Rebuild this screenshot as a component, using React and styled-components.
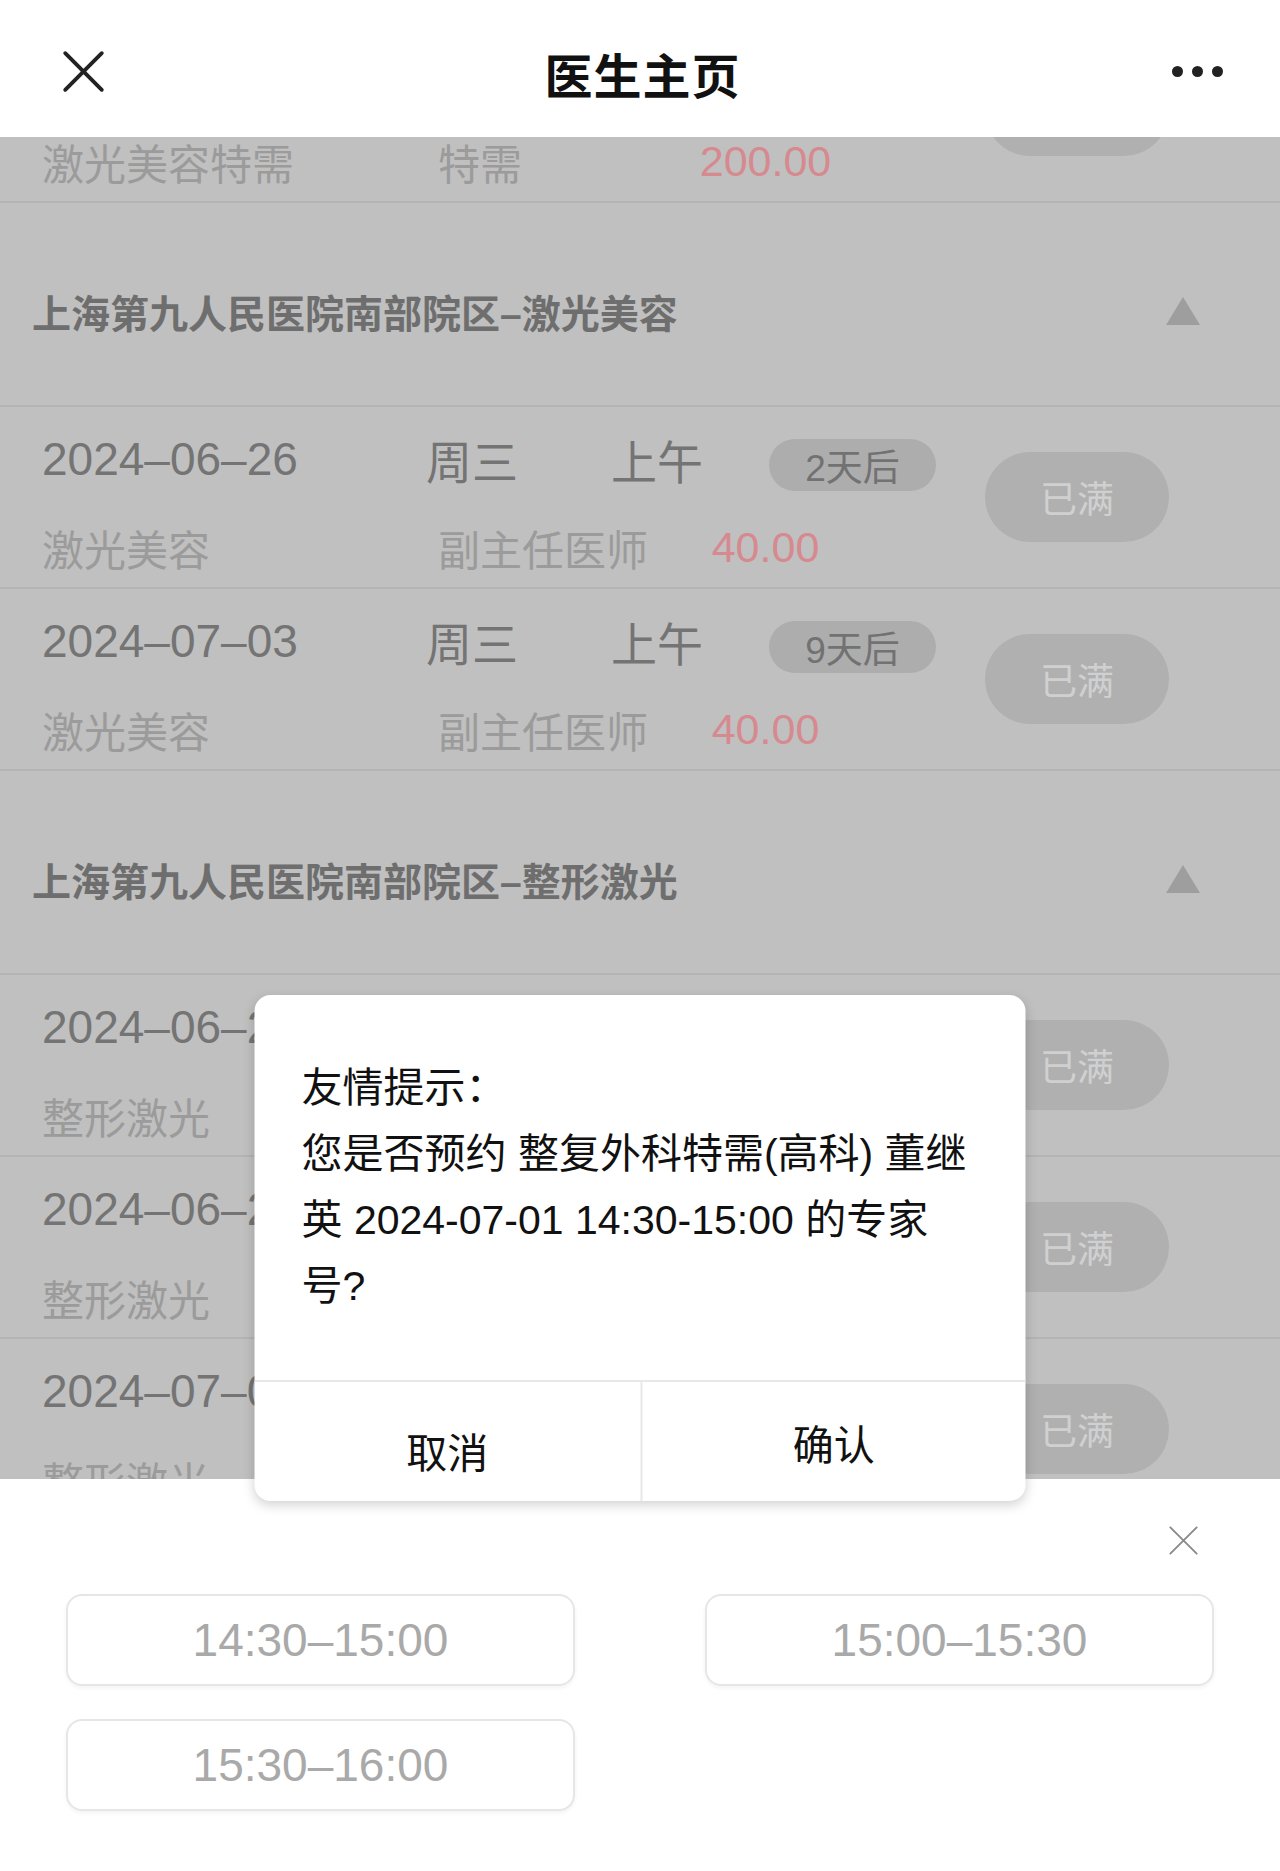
import React from 'react';
import styled, { createGlobalStyle } from 'styled-components';

const sans = `"Liberation Sans", "Noto Sans CJK SC", sans-serif`;

const GlobalStyle = createGlobalStyle`
  html, body {
    margin: 0;
    padding: 0;
    background: #ffffff;
  }
  body {
    font-family: ${sans};
  }
  * {
    box-sizing: border-box;
  }
`;

const Page = styled.div`
  position: relative;
  width: 1280px;
  height: 1871px;
  display: flex;
  flex-direction: column;
  overflow: hidden;
  background: #ffffff;
`;

const NavBar = styled.header`
  height: 137px;
  flex: none;
  display: grid;
  grid-template-columns: 1fr auto 1fr;
  align-items: center;
  padding: 6px 57px 0 62px;
  background: #ffffff;
`;

const NavTitle = styled.h1`
  margin: 0;
  font-size: 48px;
  font-weight: 700;
  color: #111111;
  letter-spacing: 1px;
  padding-top: 2px;
`;

const NavRight = styled.div`
  display: flex;
  justify-content: flex-end;
  gap: 9px;
`;

const Dot = styled.span`
  width: 11px;
  height: 11px;
  border-radius: 50%;
  background: #222222;
`;

const ListArea = styled.div`
  flex: none;
  height: 1342px;
  overflow: hidden;
  background: #c0c0c0;
`;

const Scroller = styled.div`
  transform: translateY(-${p => p.offset}px);
`;

const Section = styled.div`
  height: 204px;
  display: flex;
  align-items: center;
  justify-content: space-between;
  padding: 14px 80px 0 32px;
  border-bottom: 2px solid #b4b4b4;
`;

const SectionTitle = styled.div`
  font-size: 39px;
  font-weight: 700;
  color: #6e6e6e;
`;

const Row = styled.div`
  height: 182px;
  display: flex;
  align-items: center;
  padding: 0 111px 0 42px;
  border-bottom: 2px solid #b4b4b4;
`;

const RowInfo = styled.div`
  flex: 1;
  align-self: stretch;
  display: flex;
  flex-direction: column;
  justify-content: flex-start;
  gap: 28px;
  padding-top: 22px;
`;

const Line = styled.div`
  display: flex;
  align-items: center;
  height: 60px;
  white-space: nowrap;
`;

const Cell = styled.span`
  width: ${p => p.w}px;
  flex: none;
  font-size: ${p => p.size || 46}px;
  color: ${p => p.color || '#747474'};
  text-align: ${p => p.align || 'left'};
`;

const Badge = styled.span`
  width: 167px;
  height: 52px;
  margin-top: 12px;
  border-radius: 26px;
  background: #adadad;
  color: #727272;
  font-size: 37px;
  display: flex;
  align-items: center;
  justify-content: center;
`;

const FullButton = styled.div`
  width: 184px;
  height: 90px;
  flex: none;
  border-radius: 45px;
  background: #b0b0b0;
  color: #d0d0d0;
  font-size: 37px;
  display: flex;
  align-items: center;
  justify-content: center;
`;

const Sheet = styled.div`
  flex: 1;
  background: #ffffff;
  padding: 46px 81px 0 66px;
  display: flex;
  flex-direction: column;
`;

const SheetClose = styled.div`
  display: flex;
  justify-content: flex-end;
  height: 32px;
`;

const SlotGrid = styled.div`
  margin-top: 37px;
  margin-right: -15px;
  display: grid;
  grid-template-columns: 509px 509px;
  justify-content: space-between;
  row-gap: 33px;
`;

const Slot = styled.div`
  height: 92px;
  border: 2px solid #e6e6e6;
  border-radius: 16px;
  box-shadow: 0 2px 4px rgba(0, 0, 0, 0.05);
  display: flex;
  align-items: center;
  justify-content: center;
  font-size: 46px;
  color: #a9a9a9;
`;

const Dialog = styled.div`
  position: absolute;
  top: 995px;
  left: 50%;
  transform: translateX(-50%);
  width: 771px;
  background: #ffffff;
  border-radius: 16px;
  box-shadow: 0 4px 12px rgba(0, 0, 0, 0.18);
  overflow: hidden;
`;

const DialogBody = styled.div`
  padding: 60px 30px 61px 47px;
  font-size: 41px;
  line-height: 66px;
  color: #111111;
  white-space: nowrap;
`;

const DialogFooter = styled.div`
  display: grid;
  grid-template-columns: 1fr 1fr;
  height: 121px;
  border-top: 2px solid #e8e8e8;
`;

const DialogButton = styled.div`
  display: flex;
  align-items: center;
  justify-content: center;
  font-size: 41px;
  color: #111111;
  padding-top: ${p => (p.low ? 16 : 0)}px;
  & + & {
    border-left: 2px solid #e8e8e8;
  }
`;

const CloseIcon = ({ size, color, stroke }) => (
  <svg width={size} height={size} viewBox="0 0 40 40">
    <path d="M3 3 L37 37 M37 3 L3 37" stroke={color} strokeWidth={stroke} strokeLinecap="round" />
  </svg>
);

const Triangle = () => (
  <svg width="34" height="28" viewBox="0 0 34 28">
    <polygon points="17,0 34,28 0,28" fill="#9e9e9e" />
  </svg>
);

const Appointment = ({ date, week, period, badge, dept, title, price }) => (
  <Row>
    <RowInfo>
      <Line>
        <Cell w={384}>{date}</Cell>
        <Cell w={185}>{week}</Cell>
        <Cell w={158}>{period}</Cell>
        {badge && <Badge>{badge}</Badge>}
      </Line>
      <Line>
        <Cell w={396} size={42} color="#9b9b9b">{dept}</Cell>
        <Cell w={230} size={42} color="#9b9b9b">{title}</Cell>
        <Cell w={195} size={43} color="#d6898e" align="center">{price}</Cell>
      </Line>
    </RowInfo>
    <FullButton>已满</FullButton>
  </Row>
);

const laser = [
  { date: '2024–06–26', week: '周三', period: '上午', badge: '2天后', dept: '激光美容', title: '副主任医师', price: '40.00' },
  { date: '2024–07–03', week: '周三', period: '上午', badge: '9天后', dept: '激光美容', title: '副主任医师', price: '40.00' },
];

const plastic = [
  { date: '2024–06–24', week: '周一', period: '下午', badge: '今天', dept: '整形激光', title: '副主任医师', price: '40.00' },
  { date: '2024–06–26', week: '周三', period: '上午', badge: '2天后', dept: '整形激光', title: '副主任医师', price: '40.00' },
  { date: '2024–07–01', week: '周一', period: '下午', badge: '7天后', dept: '整形激光', title: '副主任医师', price: '40.00' },
];

const slots = ['14:30–15:00', '15:00–15:30', '15:30–16:00'];

export default function App() {
  return (
    <Page>
      <GlobalStyle />
      <NavBar>
        <CloseIcon size={43} color="#222222" stroke={3.6} />
        <NavTitle>医生主页</NavTitle>
        <NavRight>
          <Dot />
          <Dot />
          <Dot />
        </NavRight>
      </NavBar>

      <ListArea>
        <Scroller offset={116}>
          <Appointment date="2024–06–25" week="周二" period="上午" dept="激光美容特需" title="特需" price="200.00" />
          <Section>
            <SectionTitle>上海第九人民医院南部院区–激光美容</SectionTitle>
            <Triangle />
          </Section>
          {laser.map((a, i) => (
            <Appointment key={i} {...a} />
          ))}
          <Section>
            <SectionTitle>上海第九人民医院南部院区–整形激光</SectionTitle>
            <Triangle />
          </Section>
          {plastic.map((a, i) => (
            <Appointment key={i} {...a} />
          ))}
        </Scroller>
      </ListArea>

      <Sheet>
        <SheetClose>
          <CloseIcon size={31} color="#8a8a8a" stroke={2.4} />
        </SheetClose>
        <SlotGrid>
          {slots.map(s => (
            <Slot key={s}>{s}</Slot>
          ))}
        </SlotGrid>
      </Sheet>

      <Dialog>
        <DialogBody>
          友情提示：<br />
          您是否预约 整复外科特需(高科) 董继<br />
          英 2024-07-01 14:30-15:00 的专家<br />
          号?
        </DialogBody>
        <DialogFooter>
          <DialogButton low>取消</DialogButton>
          <DialogButton>确认</DialogButton>
        </DialogFooter>
      </Dialog>
    </Page>
  );
}
